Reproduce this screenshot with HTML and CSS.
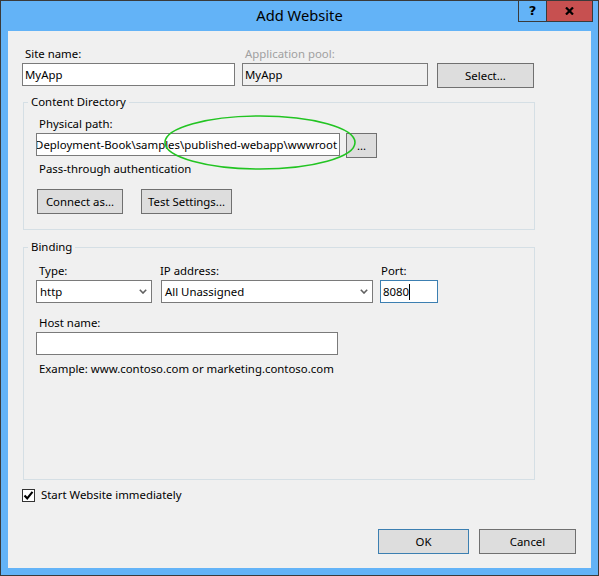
FILE: index.html
```html
<!DOCTYPE html>
<html>
<head>
<meta charset="utf-8">
<title>Add Website</title>
<link rel="stylesheet" href="styles.css">
</head>
<body>
<div class="window">
  <div class="titlebar">
    <div class="tb-spacer"></div>
    <div class="title">Add Website</div>
    <div class="tb-right">
      <div class="controls">
        <div class="ctl help">?</div>
        <div class="ctl close">
          <svg width="9" height="8" viewBox="0 0 9 8"><path d="M1 0.5 L8 7.5 M8 0.5 L1 7.5" stroke="#000" stroke-width="2.2" fill="none"/></svg>
        </div>
      </div>
    </div>
  </div>
  <div class="client">
    <div class="toprow">
      <div class="field f-site">
        <div class="lbl">Site name:</div>
        <div class="input">MyApp</div>
      </div>
      <div class="field f-pool">
        <div class="lbl disabled">Application pool:</div>
        <div class="input readonly">MyApp</div>
      </div>
      <div class="btn b-select">Select...</div>
    </div>

    <div class="group g1">
      <div class="legend">Content Directory</div>
      <div class="lbl l-phys">Physical path:</div>
      <div class="pathrow">
        <div class="input i-path"><span class="pathtext">Deployment-Book\samples\published-webapp\wwwroot</span></div>
        <div class="btn b-browse">...</div>
      </div>
      <div class="text t-pass">Pass-through authentication</div>
      <div class="btnrow">
        <div class="btn b-connect">Connect as...</div>
        <div class="btn b-test">Test Settings...</div>
      </div>
    </div>

    <div class="group g2">
      <div class="legend">Binding</div>
      <div class="bindrow">
        <div class="field f-type">
          <div class="lbl">Type:</div>
          <div class="select">http<svg class="chev" width="8" height="5" viewBox="0 0 8 5"><path d="M0.8 0.8 L4 4 L7.2 0.8" stroke="#606060" stroke-width="1.6" fill="none"/></svg></div>
        </div>
        <div class="field f-ip">
          <div class="lbl l-ip">IP address:</div>
          <div class="select">All Unassigned<svg class="chev" width="8" height="5" viewBox="0 0 8 5"><path d="M0.8 0.8 L4 4 L7.2 0.8" stroke="#606060" stroke-width="1.6" fill="none"/></svg></div>
        </div>
        <div class="field f-port">
          <div class="lbl l-port">Port:</div>
          <div class="input focused">8080<span class="caret"></span></div>
        </div>
      </div>
      <div class="lbl l-host">Host name:</div>
      <div class="input i-host"></div>
      <div class="text t-example">Example: www.contoso.com or marketing.contoso.com</div>
    </div>

    <div class="checkrow">
      <div class="checkbox">
        <svg width="11" height="11" viewBox="0 0 11 11"><path d="M1.5 5.5 L4.2 8.3 L9.5 1.8" stroke="#000" stroke-width="2.1" fill="none"/></svg>
      </div>
      <div class="text">Start Website immediately</div>
    </div>

    <div class="footer">
      <div class="btn b-ok">OK</div>
      <div class="btn b-cancel">Cancel</div>
    </div>

    <svg class="ellipse" width="196" height="60" viewBox="0 0 196 60"><ellipse cx="98" cy="29.5" rx="95" ry="26.5" stroke="#22c422" stroke-width="1.6" fill="none"/></svg>
  </div>
</div>
</body>
</html>
```

FILE: styles.css
```css
* { box-sizing: border-box; }
html, body { margin: 0; padding: 0; }
body {
  width: 599px;
  height: 576px;
  overflow: hidden;
  font-family: "Noto Sans", "Open Sans", sans-serif;
  font-size: 11.4px;
  color: #000;
  background: #ffffff;
}
.window {
  width: 599px;
  height: 576px;
  border: 1px solid #3a3a3a;
  background: #63b3f7;
  display: flex;
  flex-direction: column;
}
.titlebar {
  height: 30px;
  display: grid;
  grid-template-columns: 1fr auto 1fr;
  align-items: start;
}
.title {
  margin-top: 5px;
  font-size: 14.7px;
  line-height: 18px;
  color: #000;
}
.tb-right {
  display: flex;
  justify-content: flex-end;
}
.controls {
  display: flex;
  margin-top: -1px;
  margin-right: 5px;
  border: 1px solid #3a3a3a;
  height: 22px;
}
.ctl {
  height: 20px;
  display: flex;
  align-items: center;
  justify-content: center;
}
.help {
  width: 28px;
  border-right: 1px solid #3a3a3a;
  font-family: "DejaVu Sans", sans-serif;
  font-weight: bold;
  font-size: 13px;
  line-height: 20px;
}
.close {
  width: 45px;
  background: #c75050;
}
.client {
  position: relative;
  height: 537px;
  margin: 0 7px;
  background: #f0f0f0;
  padding: 13px 15px 14px 14px;
  display: flex;
  flex-direction: column;
}
.lbl, .text, .legend {
  line-height: 16px;
  white-space: nowrap;
}
.lbl { height: 18px; padding-top: 2px; margin-bottom: 1px; padding-left: 3px; }
.lbl.disabled { color: #a0a0a0; }
.field { display: flex; flex-direction: column; }

.input, .select {
  height: 23px;
  border: 1px solid #7a7a7a;
  background: #fff;
  padding: 0 2px;
  line-height: 16px;
  display: flex;
  align-items: center;
  white-space: nowrap;
  overflow: hidden;
}
.input.readonly { background: #f0f0f0; }
.input.focused { border-color: #3c7fb1; }
.caret {
  display: inline-block;
  width: 1px;
  height: 16px;
  background: #000;
}
.select { justify-content: space-between; padding-right: 4px; padding-left: 3px; }
.chev { flex: none; }

.btn {
  height: 25px;
  border: 1px solid #707070;
  background: #dddddd;
  display: flex;
  align-items: center;
  justify-content: center;
  line-height: 16px;
  white-space: nowrap;
}

.toprow { display: flex; align-items: flex-start; }
.f-site { width: 213px; }
.f-pool { width: 186px; margin-left: 7px; }
.b-select { width: 97px; margin-left: 9px; margin-top: 19px; }

.group {
  border: 1px solid #d5dfe5;
  margin-left: 1px;
  width: 512px;
  padding: 0 12px 15px 12px;
  display: flex;
  flex-direction: column;
  align-items: flex-start;
}
.legend {
  height: 16px;
  margin-top: -9px;
  margin-left: -8px;
  padding: 0 3px;
  background: #f0f0f0;
}
.g1 { margin-top: 14px; }
.l-phys { margin-top: 4px; }
.pathrow { display: flex; align-items: flex-start; }
.i-path { width: 304px; justify-content: flex-end; }
.pathtext { flex: none; }
.b-browse { width: 31px; margin-left: 6px; }
.t-pass { margin-top: 3px; padding-left: 3px; }
.btnrow { display: flex; margin-top: 12px; }
.b-connect { width: 86px; margin-left: 1px; }
.b-test { width: 91px; margin-left: 18px; }

.g2 { margin-top: 17px; height: 233px; }
.bindrow { display: flex; margin-top: 6px; }
.f-type { width: 116px; }
.f-ip { width: 212px; margin-left: 9px; }
.l-ip { padding-left: 0; margin-left: -1px; }
.f-port { width: 58px; margin-left: 7px; }
.l-port { padding-left: 1px; }
.l-host { margin-top: 10px; }
.i-host { width: 302px; }
.t-example { margin-top: 6px; padding-left: 3px; }

.checkrow {
  display: flex;
  align-items: center;
  margin-top: 7px;
  height: 16px;
}
.checkbox {
  width: 13px;
  height: 13px;
  border: 1px solid #333;
  background: #fff;
  display: flex;
  align-items: center;
  justify-content: center;
  margin-right: 6px;
}
.footer {
  margin-top: auto;
  display: flex;
  justify-content: flex-end;
}
.b-ok { width: 91px; border-color: #3c7fb1; }
.b-cancel { width: 97px; margin-left: 10px; }

.ellipse {
  position: absolute;
  left: 154px;
  top: 82px;
  pointer-events: none;
}
```
